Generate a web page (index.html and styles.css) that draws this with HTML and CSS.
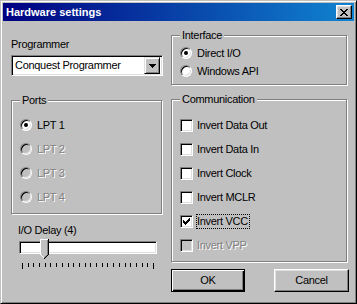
FILE: index.html
```html
<!DOCTYPE html>
<html lang="en">
<head>
    <meta charset="UTF-8">
    <title>Hardware settings</title>
    <link rel="stylesheet" href="styles.css">
</head>
<body>
    <div class="window">
        <div class="titlebar">
            <span class="title">Hardware settings</span>
            <span class="close-btn">
                <svg width="8" height="7" viewBox="0 0 8 7" shape-rendering="crispEdges">
                    <path d="M0 0h2v1h-2zM6 0h2v1h-2zM1 1h2v1h-2zM5 1h2v1h-2zM2 2h4v1h-4zM3 3h2v1h-2zM2 4h4v1h-4zM1 5h2v1h-2zM5 5h2v1h-2zM0 6h2v1h-2zM6 6h2v1h-2z" fill="#000"/>
                </svg>
            </span>
        </div>

        <div class="content">
            <!-- left column -->
            <div class="col-left">
                <div class="field-label">Programmer</div>
                <div class="combo">
                    <span class="combo-text">Conquest Programmer</span>
                    <span class="combo-btn">
                        <svg width="7" height="4" viewBox="0 0 7 4" shape-rendering="crispEdges">
                            <path d="M0 0h7v1h-7zM1 1h5v1h-5zM2 2h3v1h-3zM3 3h1v1h-1z" fill="#000"/>
                        </svg>
                    </span>
                </div>

                <fieldset class="group ports">
                    <legend>Ports</legend>
                    <div class="opt"><span class="radio checked"></span><span class="opt-label">LPT 1</span></div>
                    <div class="opt disabled"><span class="radio"></span><span class="opt-label">LPT 2</span></div>
                    <div class="opt disabled"><span class="radio"></span><span class="opt-label">LPT 3</span></div>
                    <div class="opt disabled"><span class="radio"></span><span class="opt-label">LPT 4</span></div>
                </fieldset>

                <div class="field-label delay-label">I/O Delay (4)</div>
                <div class="slider">
                    <div class="slider-track"></div>
                    <svg class="slider-thumb" width="9" height="21" viewBox="0 0 9 21" shape-rendering="crispEdges">
                        <path d="M0 0h9v16l-4 4h-1l-4-4z" fill="#c0c0c0"/>
                        <path d="M0 0h8v1h-7v15h-1z" fill="#fff"/>
                        <path d="M1 16h1v1h-1zM2 17h1v1h-1zM3 18h1v1h-1z" fill="#fff"/>
                        <path d="M8 0h1v16h-1zM7 16h1v1h-1zM6 17h1v1h-1zM5 18h1v1h-1zM4 19h1v1h-1z" fill="#000"/>
                        <path d="M7 1h1v15h-1zM6 16h1v1h-1zM5 17h1v1h-1zM4 18h1v1h-1z" fill="#808080"/>
                    </svg>
                    <svg class="slider-ticks" width="140" height="7" viewBox="0 0 140 7" shape-rendering="crispEdges">
                        <g fill="#000">
                            <rect x="3" y="0" width="1" height="6"/>
                            <rect x="9" y="0" width="1" height="4"/>
                            <rect x="14" y="0" width="1" height="4"/>
                            <rect x="20" y="0" width="1" height="4"/>
                            <rect x="26" y="0" width="1" height="4"/>
                            <rect x="31" y="0" width="1" height="4"/>
                            <rect x="37" y="0" width="1" height="4"/>
                            <rect x="43" y="0" width="1" height="4"/>
                            <rect x="49" y="0" width="1" height="4"/>
                            <rect x="54" y="0" width="1" height="4"/>
                            <rect x="60" y="0" width="1" height="4"/>
                            <rect x="66" y="0" width="1" height="4"/>
                            <rect x="71" y="0" width="1" height="4"/>
                            <rect x="77" y="0" width="1" height="4"/>
                            <rect x="83" y="0" width="1" height="4"/>
                            <rect x="88" y="0" width="1" height="4"/>
                            <rect x="94" y="0" width="1" height="4"/>
                            <rect x="100" y="0" width="1" height="4"/>
                            <rect x="106" y="0" width="1" height="4"/>
                            <rect x="111" y="0" width="1" height="4"/>
                            <rect x="117" y="0" width="1" height="4"/>
                            <rect x="123" y="0" width="1" height="4"/>
                            <rect x="128" y="0" width="1" height="4"/>
                            <rect x="134" y="0" width="1" height="6"/>
                        </g>
                    </svg>
                </div>
            </div>

            <!-- right column -->
            <div class="col-right">
                <fieldset class="group iface">
                    <legend>Interface</legend>
                    <div class="opt short"><span class="radio checked"></span><span class="opt-label">Direct I/O</span></div>
                    <div class="opt short"><span class="radio"></span><span class="opt-label">Windows API</span></div>
                </fieldset>

                <fieldset class="group comm">
                    <legend>Communication</legend>
                    <div class="opt"><span class="check"></span><span class="opt-label">Invert Data Out</span></div>
                    <div class="opt"><span class="check"></span><span class="opt-label">Invert Data In</span></div>
                    <div class="opt"><span class="check"></span><span class="opt-label">Invert Clock</span></div>
                    <div class="opt"><span class="check"></span><span class="opt-label">Invert MCLR</span></div>
                    <div class="opt">
                        <span class="check">
                            <svg width="7" height="7" viewBox="0 0 7 7" shape-rendering="crispEdges">
                                <path d="M6 0h1v3h-1v1h-1v1h-1v1h-1v1h-1v-1h-1v-1h-1v-3h1v1h1v1h1v-1h1v-1h1z" fill="#000"/>
                            </svg>
                        </span>
                        <span class="opt-label focused">Invert VCC</span>
                    </div>
                    <div class="opt disabled"><span class="check"></span><span class="opt-label">Invert VPP</span></div>
                </fieldset>

                <div class="buttons">
                    <button class="btn default">OK</button>
                    <button class="btn cancel">Cancel</button>
                </div>
            </div>
        </div>
    </div>
</body>
</html>
```

FILE: styles.css
```css
body {
    margin: 0;
    font-family: 'Liberation Sans', Arial, sans-serif;
    font-size: 11px;
    line-height: 13px;
    letter-spacing: -0.3px;
    color: #000;
    background: #c0c0c0;
}
.window {
    width: 357px;
    height: 304px;
    box-sizing: border-box;
    padding: 2px;
    background: #c0c0c0;
    border: 1px solid;
    border-color: #c0c0c0 #000 #000 #c0c0c0;
    box-shadow: inset 1px 1px 0 #fff, inset -1px -1px 0 #808080;
}
.titlebar {
    height: 18px;
    display: flex;
    align-items: center;
    justify-content: space-between;
    padding: 0 2px 0 3px;
    background: linear-gradient(to right, #000080, #1084d0);
}
.title {
    color: #fff;
    font-weight: bold;
    letter-spacing: 0;
}
.close-btn {
    width: 16px;
    height: 14px;
    box-sizing: border-box;
    display: flex;
    align-items: center;
    justify-content: center;
    background: #c0c0c0;
    border: 1px solid;
    border-color: #fff #000 #000 #fff;
    box-shadow: inset -1px -1px 0 #808080, inset 1px 1px 0 #dfdfdf;
}
.content {
    display: grid;
    grid-template-columns: 152px 178px;
    column-gap: 8px;
    padding: 8px 0 0 8px;
}
.col-left,
.col-right {
    display: flex;
    flex-direction: column;
}
.field-label {
    margin-top: 9px;
}
.combo {
    margin-top: 4px;
    height: 21px;
    box-sizing: border-box;
    display: flex;
    align-items: center;
    background: #fff;
    border: 1px solid;
    border-color: #808080 #fff #fff #808080;
    box-shadow: inset 1px 1px 0 #000, inset -1px -1px 0 #dfdfdf;
    padding: 2px;
}
.combo-text {
    flex: 1;
    padding-left: 1px;
}
.combo-btn {
    width: 16px;
    height: 17px;
    box-sizing: border-box;
    display: flex;
    align-items: center;
    justify-content: center;
    background: #c0c0c0;
    border: 1px solid;
    border-color: #dfdfdf #000 #000 #dfdfdf;
    box-shadow: inset 1px 1px 0 #fff, inset -1px -1px 0 #808080;
}

/* group boxes */
.group {
    margin: 0;
    min-width: 0;
    border: 1px solid #808080;
    box-shadow: inset 1px 1px 0 #fff, 1px 1px 0 #fff;
    padding: 6px 8px 4px 8px;
}
.group legend {
    padding: 0 2px;
    background: #c0c0c0;
}
.ports {
    margin-top: 18px;
    width: 151px;
    box-sizing: border-box;
}
.iface,
.comm {
    width: 176px;
    box-sizing: border-box;
}
.iface {
    padding-top: 2px;
}
.comm {
    margin-top: 8px;
    padding-top: 7px;
}
.opt {
    height: 24px;
    display: flex;
    align-items: center;
}
.opt.short {
    height: 18px;
}
.opt-label {
    border: 1px dotted transparent;
    padding: 0 1px 0 0;
}
.opt-label.focused {
    border-color: #000;
}
.radio + .opt-label {
    margin-left: 4px;
}
.check + .opt-label {
    margin-left: 3px;
}
.radio {
    width: 12px;
    height: 12px;
    box-sizing: border-box;
    display: flex;
    align-items: center;
    justify-content: center;
    border-radius: 50%;
    background: #fff;
    border: 1px solid;
    border-color: #808080 #fff #fff #808080;
    box-shadow: inset 1px 1px 0 #000, inset -1px -1px 0 #dfdfdf;
}
.radio.checked::after {
    content: '';
    width: 4px;
    height: 4px;
    border-radius: 50%;
    background: #000;
}
.check {
    width: 13px;
    height: 13px;
    box-sizing: border-box;
    display: flex;
    align-items: center;
    justify-content: center;
    background: #fff;
    border: 1px solid;
    border-color: #808080 #fff #fff #808080;
    box-shadow: inset 1px 1px 0 #000, inset -1px -1px 0 #dfdfdf;
}
.disabled .opt-label {
    color: #808080;
    text-shadow: 1px 1px 0 #fff;
}
.disabled .radio,
.disabled .check {
    background: #c0c0c0;
}

/* slider */
.delay-label {
    margin-top: 10px;
    margin-left: 7px;
}
.slider {
    position: relative;
    margin-left: 8px;
    width: 140px;
}
.slider-track {
    margin-top: 4px;
    width: 138px;
    height: 13px;
    box-sizing: border-box;
    background: #fff;
    border: 1px solid;
    border-color: #808080 #fff #fff #808080;
    box-shadow: inset 1px 1px 0 #000, inset -1px -1px 0 #dfdfdf;
}
.slider-thumb {
    position: absolute;
    left: 21px;
    top: 2px;
}
.slider-ticks {
    display: block;
    margin-top: 9px;
}

/* buttons */
.buttons {
    margin-top: 7px;
    display: flex;
    justify-content: space-between;
}
.btn {
    height: 23px;
    width: 75px;
    box-sizing: border-box;
    font: inherit;
    letter-spacing: inherit;
    color: #000;
    background: #c0c0c0;
    padding: 0;
    border: 1px solid;
    border-color: #fff #000 #000 #fff;
    box-shadow: inset -1px -1px 0 #808080, inset 1px 1px 0 #dfdfdf;
}
.btn.default {
    width: 74px;
    border-color: #000;
    box-shadow: inset 1px 1px 0 #fff, inset -1px -1px 0 #000, inset -2px -2px 0 #808080;
}
```
